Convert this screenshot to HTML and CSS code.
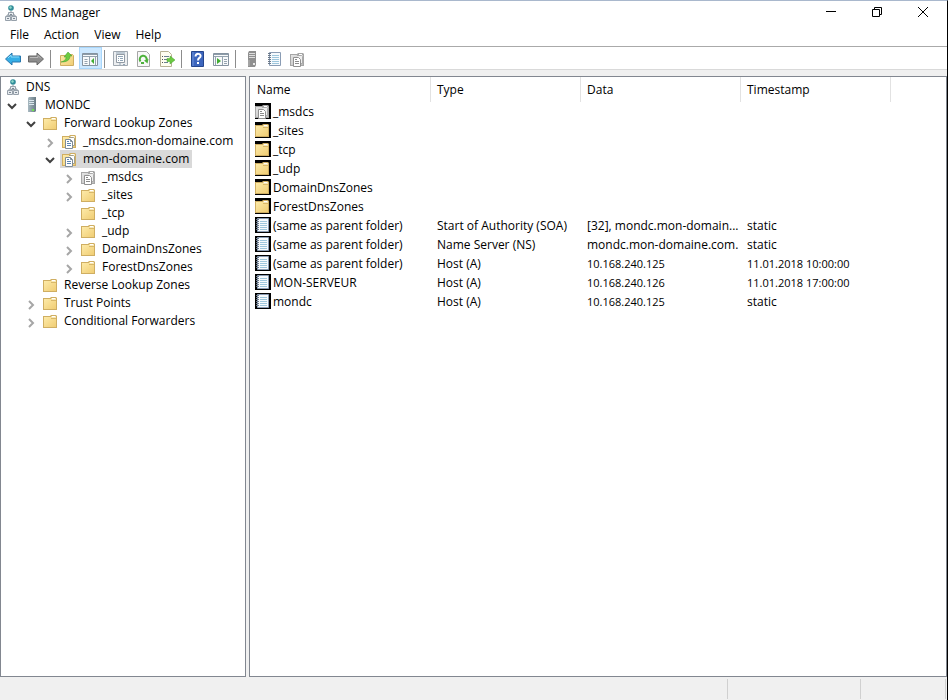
FILE: index.html
```html
<!DOCTYPE html>
<html lang="en">

<head>
  <meta charset="utf-8">
  <title>DNS Manager</title>
  <link rel="stylesheet" href="styles.css">
</head>

<body>
  <!-- shared icons -->
  <svg class="defs" aria-hidden="true">
    <linearGradient id="gold" x1="0" y1="0" x2="1" y2="1">
      <stop offset="0" stop-color="#fdeaa8"/>
      <stop offset="1" stop-color="#f0cd74"/>
    </linearGradient>
    <linearGradient id="silver" x1="0" y1="0" x2="1" y2="1">
      <stop offset="0" stop-color="#e4e4e4"/>
      <stop offset="1" stop-color="#bdbdbd"/>
    </linearGradient>
    <linearGradient id="steel" x1="0" y1="0" x2="1" y2="0">
      <stop offset="0" stop-color="#a9bac2"/>
      <stop offset="1" stop-color="#687a84"/>
    </linearGradient>
    <symbol id="i-folder" viewBox="0 0 16 16">
      <path d="M0 3h7l1-1h5l1 1v12H0z" fill="#cfae62"/>
      <path d="M1 4h12v10H1z" fill="url(#gold)"/>
      <path d="M8 3h5v2H9z" fill="#f8e7b4"/>
      <path d="M9 3.500h3" stroke="#fff"/>
      <path d="M8 5.500h5" stroke="#d9b869"/>
    </symbol>
    <symbol id="i-page" viewBox="0 0 16 16">
      <path d="M7 4.500h4.500l1 1v7H10" fill="#fff" stroke="#a3a08c"/>
      <path d="M3.500 6.500h5l2 2v7h-7z" fill="#fff" stroke="#7f8c97"/>
      <path d="M8.500 6.500v2h2" fill="none" stroke="#7f8c97"/>
      <path d="M5 8.500h2M5 10.500h4M5 12.500h4" stroke="#5b86b4"/>
    </symbol>
    <symbol id="i-zone" viewBox="0 0 16 16">
      <use href="#i-folder"/>
      <use href="#i-page"/>
    </symbol>
    <symbol id="i-zonegray" viewBox="0 0 16 16">
      <path d="M0 3h7l1-1h5l1 1v12H0z" fill="#a6a6a6"/>
      <path d="M1 4h12v10H1z" fill="url(#silver)"/>
      <path d="M9 3.500h3" stroke="#fff"/>
      <path d="M7 4.500h4.500l1 1v7H10" fill="#eee" stroke="#aaa"/>
      <path d="M3.500 6.500h5l2 2v7h-7z" fill="#fff" stroke="#909090"/>
      <path d="M5 8.500h2M5 10.500h4M5 12.500h4" stroke="#8a8a8a"/>
    </symbol>
    <symbol id="i-record" viewBox="0 0 16 16">
      <path d="M2.500 1.500h11v13h-11z" fill="#f6fafd" stroke="#8a9cb4"/>
      <path d="M5 4.500h7M5 6.500h7M5 8.500h7M5 10.500h7M5 12.500h7" stroke="#9dc6dc"/>
      <path d="M1 2.500h3M1 4.500h3M1 6.500h3M1 8.500h3M1 10.500h3M1 12.500h3" stroke="#6b7888"/>
    </symbol>
    <symbol id="i-dns" viewBox="0 0 16 16">
      <circle cx="8" cy="3" r="2.800" fill="#328d9a"/>
      <path d="M6 2l2-1 1 2-2 1z" fill="#8ed8c8"/>
      <path d="M8 6v4M4 12v-2h8v2" fill="none" stroke="#8b959e"/>
      <path d="M5.500 7.500h5v3h-5zM2.500 11.500h5v4h-5zM8.500 11.500h5v4h-5z" fill="#e6eaee" stroke="#96a0aa"/>
      <path d="M4 13.500h2M10 13.500h2M7 9.500h2" stroke="#7b8792"/>
    </symbol>
    <symbol id="i-server" viewBox="0 0 16 16">
      <path d="M4 1l1-1h7v14l-1 1H4z" fill="url(#steel)"/>
      <path d="M5 3.500h5M5 5.500h5M5 7.500h5" stroke="#dce8ee"/>
      <path d="M8 12h2v2H8z" fill="#6ee34f"/>
    </symbol>
    <symbol id="i-down" viewBox="0 0 16 16">
      <path d="M4 7l4 4 4-4" fill="none" stroke="#404040" stroke-width="2"/>
    </symbol>
    <symbol id="i-right" viewBox="0 0 16 16">
      <path d="M6 6l4 4-4 4" fill="none" stroke="#a6a6a6" stroke-width="2"/>
    </symbol>
  </svg>

  <div class="window">
    <header class="titlebar">
      <svg class="icon"><use href="#i-dns"/></svg>
      <h1>DNS Manager</h1>
      <div class="controls">
        <button aria-label="Minimize"><svg class="ctl" viewBox="0 0 12 12"><path d="M1 5.500h10"/></svg></button>
        <button aria-label="Restore"><svg class="ctl" viewBox="0 0 12 12"><path d="M1.500 3.500h7v7h-7zM3.500 3.500v-2h7v7h-2"/></svg></button>
        <button aria-label="Close"><svg class="ctl" viewBox="0 0 12 12"><path d="M1 1l10 10M11 1L1 11"/></svg></button>
      </div>
    </header>

    <nav class="menubar">
      <button>File</button>
      <button>Action</button>
      <button>View</button>
      <button>Help</button>
    </nav>

    <div class="toolbar">
      <button aria-label="Back"><svg class="icon" viewBox="0 0 16 16"><path d="M.5 8L7 2v3h8.500v6H7v3z" fill="#35aee6" stroke="#2877ad"/><path d="M3 7l3-3v2h8" fill="none" stroke="#8bdcfa"/></svg></button>
      <button aria-label="Forward"><svg class="icon" viewBox="0 0 16 16"><path d="M15.500 8L9 2v3H.5v6H9v3z" fill="#8c8c8c" stroke="#666"/><path d="M2 6.500h8v-2l3 3" fill="none" stroke="#b9b9b9"/></svg></button>
      <i class="sep"></i>
      <button aria-label="Up one level"><svg class="icon" viewBox="0 0 16 16"><path d="M1.500 4.500h7l1-1h4l1 1v10h-13z" fill="url(#gold)" stroke="#cfae62"/><path d="M2 11c4-1 5-3 5-5H5l4-5 4 4h-2c0 4-3 6-9 6z" fill="#6ccb3f" stroke="#3d9a2e" stroke-width=".5"/></svg></button>
      <button class="on" aria-label="Show console tree"><svg class="icon" viewBox="0 0 16 16"><path d="M.5 2.500h15v12H.5z" fill="#f8fafb" stroke="#8593a0"/><path d="M1 3.500h14" stroke="#8d9ca9"/><path d="M1 5.500h14M7.500 6v8M2.500 8.500h3M2.500 10.500h3M2.500 12.500h3M13.500 6v8" stroke="#95a3af"/><path d="M12 7v6L9 10z" fill="#3fac30"/></svg></button>
      <i class="sep"></i>
      <button aria-label="Properties"><svg class="icon" viewBox="0 0 16 16"><path d="M.5.500h14v14H.5z" fill="#eceef0" stroke="#a0a8b0"/><path d="M3.500 3.500h8v8h-8z" fill="#fff" stroke="#929ba4"/><path d="M3 2h9M5 5.500h5M5 7.500h1M7 7.500h3M5 9.500h1M7 9.500h3M6 13h2M10 13.500h2" stroke="#8fa4b6"/></svg></button>
      <button aria-label="Refresh"><svg class="icon" viewBox="0 0 16 16"><path d="M1.500.500h9l3 3v12h-12z" fill="#f8f8f8" stroke="#a6a6a6"/><path d="M4.500 10.500a3.500 3.500 0 1 1 6-1" fill="none" stroke="#4db13b" stroke-width="2"/><path d="M5 12h3" stroke="#4db13b" stroke-width="2"/><path d="M12.500 8l-1 4.500L8 9.500z" fill="#4db13b"/></svg></button>
      <button aria-label="Export list"><svg class="icon" viewBox="0 0 16 16"><path d="M1.500.500h8l3 3v12h-11z" fill="#fffef0" stroke="#b8b294"/><path d="M5 5.500h5M5 8.500h4M5 11.500h4" stroke="#6c8090"/><path d="M3 5.500h1M3 8.500h1M3 11.500h1" stroke="#555"/><path d="M8 7.500h3V5l5 4-5 4v-2.500H8z" fill="#6cc942" stroke="#43a52d" stroke-width=".5"/></svg></button>
      <i class="sep"></i>
      <button aria-label="Help"><svg class="icon" viewBox="0 0 16 16"><path d="M1.500.500h12v15h-12z" fill="#3c65bd" stroke="#24458d"/><path d="M3 1v14" stroke="#6f94db"/><path d="M5.500 5.500c0-4 6-3 5 0-.5 1.500-2.500 1.500-2.500 4M8 11v2" fill="none" stroke="#fff" stroke-width="2"/></svg></button>
      <button aria-label="Show action pane"><svg class="icon" viewBox="0 0 16 16"><path d="M.5 2.500h15v12H.5z" fill="#f8fafb" stroke="#8593a0"/><path d="M1 3.500h14" stroke="#8d9ca9"/><path d="M1 5.500h14M9.500 6v8M11 8.500h3M11 10.500h3M11 12.500h3M2.500 6v8" stroke="#95a3af"/><path d="M4 7v6l4-3z" fill="#3fac30"/></svg></button>
      <i class="sep"></i>
      <button aria-label="New server"><svg class="icon" viewBox="0 0 16 16"><path d="M5 0h7v14l-1 2H4V2z" fill="#8f8f8f"/><path d="M5 2.500h6M5 4.500h6M5 6.500h6" stroke="#ddd"/><path d="M5 9v6" stroke="#b8b8b8"/><path d="M9 12h2v2H9z" fill="#e8e8e8"/></svg></button>
      <button aria-label="New record"><svg class="icon"><use href="#i-record"/></svg></button>
      <button aria-label="New zone"><svg class="icon"><use href="#i-zonegray"/></svg></button>
    </div>

    <main class="panes">
      <section class="pane tree-pane">
        <ul class="tree">
          <li>
            <button class="node"><svg class="icon"><use href="#i-dns"/></svg>DNS</button>
            <ul>
              <li>
                <button class="toggle" aria-label="Collapse"><svg class="icon"><use href="#i-down"/></svg></button><button class="node"><svg class="icon"><use href="#i-server"/></svg>MONDC</button>
                <ul>
                  <li>
                    <button class="toggle" aria-label="Collapse"><svg class="icon"><use href="#i-down"/></svg></button><button class="node"><svg class="icon"><use href="#i-folder"/></svg>Forward Lookup Zones</button>
                    <ul>
                      <li><button class="toggle" aria-label="Expand"><svg class="icon"><use href="#i-right"/></svg></button><button class="node"><svg class="icon"><use href="#i-zone"/></svg>_msdcs.mon-domaine.com</button></li>
                      <li>
                        <button class="toggle" aria-label="Collapse"><svg class="icon"><use href="#i-down"/></svg></button><button class="node selected"><svg class="icon"><use href="#i-zone"/></svg>mon-domaine.com</button>
                        <ul>
                          <li><button class="toggle" aria-label="Expand"><svg class="icon"><use href="#i-right"/></svg></button><button class="node"><svg class="icon"><use href="#i-zonegray"/></svg>_msdcs</button></li>
                          <li><button class="toggle" aria-label="Expand"><svg class="icon"><use href="#i-right"/></svg></button><button class="node"><svg class="icon"><use href="#i-folder"/></svg>_sites</button></li>
                          <li><span class="toggle"></span><button class="node"><svg class="icon"><use href="#i-folder"/></svg>_tcp</button></li>
                          <li><button class="toggle" aria-label="Expand"><svg class="icon"><use href="#i-right"/></svg></button><button class="node"><svg class="icon"><use href="#i-folder"/></svg>_udp</button></li>
                          <li><button class="toggle" aria-label="Expand"><svg class="icon"><use href="#i-right"/></svg></button><button class="node"><svg class="icon"><use href="#i-folder"/></svg>DomainDnsZones</button></li>
                          <li><button class="toggle" aria-label="Expand"><svg class="icon"><use href="#i-right"/></svg></button><button class="node"><svg class="icon"><use href="#i-folder"/></svg>ForestDnsZones</button></li>
                        </ul>
                      </li>
                    </ul>
                  </li>
                  <li><span class="toggle"></span><button class="node"><svg class="icon"><use href="#i-folder"/></svg>Reverse Lookup Zones</button></li>
                  <li><button class="toggle" aria-label="Expand"><svg class="icon"><use href="#i-right"/></svg></button><button class="node"><svg class="icon"><use href="#i-folder"/></svg>Trust Points</button></li>
                  <li><button class="toggle" aria-label="Expand"><svg class="icon"><use href="#i-right"/></svg></button><button class="node"><svg class="icon"><use href="#i-folder"/></svg>Conditional Forwarders</button></li>
                </ul>
              </li>
            </ul>
          </li>
        </ul>
      </section>

      <section class="pane list-pane">
        <table class="records">
          <colgroup>
            <col class="c-name"><col class="c-type"><col class="c-data"><col class="c-time"><col>
          </colgroup>
          <thead>
            <tr><th>Name</th><th>Type</th><th>Data</th><th>Timestamp</th><td></td></tr>
          </thead>
          <tbody>
            <tr><td><svg class="icon tile"><use href="#i-zonegray"/></svg>_msdcs</td><td></td><td></td><td></td><td></td></tr>
            <tr><td><svg class="icon tile"><use href="#i-folder"/></svg>_sites</td><td></td><td></td><td></td><td></td></tr>
            <tr><td><svg class="icon tile"><use href="#i-folder"/></svg>_tcp</td><td></td><td></td><td></td><td></td></tr>
            <tr><td><svg class="icon tile"><use href="#i-folder"/></svg>_udp</td><td></td><td></td><td></td><td></td></tr>
            <tr><td><svg class="icon tile"><use href="#i-folder"/></svg>DomainDnsZones</td><td></td><td></td><td></td><td></td></tr>
            <tr><td><svg class="icon tile"><use href="#i-folder"/></svg>ForestDnsZones</td><td></td><td></td><td></td><td></td></tr>
            <tr><td><svg class="icon tile"><use href="#i-record"/></svg>(same as parent folder)</td><td>Start of Authority (SOA)</td><td>[32], mondc.mon-domain...</td><td>static</td><td></td></tr>
            <tr><td><svg class="icon tile"><use href="#i-record"/></svg>(same as parent folder)</td><td>Name Server (NS)</td><td>mondc.mon-domaine.com.</td><td>static</td><td></td></tr>
            <tr><td><svg class="icon tile"><use href="#i-record"/></svg>(same as parent folder)</td><td>Host (A)</td><td class="num">10.168.240.125</td><td class="num">11.01.2018 10:00:00</td><td></td></tr>
            <tr><td><svg class="icon tile"><use href="#i-record"/></svg>MON-SERVEUR</td><td>Host (A)</td><td class="num">10.168.240.126</td><td class="num">11.01.2018 17:00:00</td><td></td></tr>
            <tr><td><svg class="icon tile"><use href="#i-record"/></svg>mondc</td><td>Host (A)</td><td class="num">10.168.240.125</td><td>static</td><td></td></tr>
          </tbody>
        </table>
      </section>
    </main>

    <footer class="statusbar">
      <span></span>
      <span class="s-mid"></span>
      <span class="s-end"></span>
    </footer>
  </div>
</body>
</html>
```

FILE: styles.css
```css
* {
  box-sizing: border-box;
}
body {
  margin: 0;
  font-family: "Open Sans", "Noto Sans", sans-serif;
  font-size: 12px;
  line-height: 18px;
  color: #000;
  background: #f0f0f0;
}
button {
  margin: 0;
  padding: 0;
  border: 0;
  background: none;
  font: inherit;
  color: inherit;
}
.defs {
  position: absolute;
  width: 0;
  height: 0;
}
.icon {
  width: 16px;
  height: 16px;
  flex: none;
  display: block;
}
.window {
  display: flex;
  flex-direction: column;
  height: 100vh;
  border-top: 1px solid #a9b8cd;
  border-right: 1px solid #000;
}

/* title */
.titlebar {
  display: flex;
  align-items: center;
  height: 24px;
  padding: 0 1px 0 3px;
  background: #fff;
}
.titlebar h1 {
  flex: 1;
  margin: 0 0 0 4px;
  font-size: 12px;
  font-weight: normal;
}
.controls {
  display: flex;
}
.controls button {
  width: 46px;
  height: 24px;
}
.ctl {
  display: block;
  width: 12px;
  height: 12px;
  margin: 0 auto 2px;
  fill: none;
  stroke: #000;
}

/* menu */
.menubar {
  display: flex;
  height: 22px;
  padding: 0 3px 2px;
  background: #fff;
  border-bottom: 1px solid #aaa;
}
.menubar button {
  padding: 0 8px 0 7px;
}

/* toolbar */
.toolbar {
  display: flex;
  height: 23px;
  padding-left: 2px;
  background: #fff;
  border-bottom: 1px solid #d9d9d9;
}
.toolbar button {
  width: 23px;
  padding: 2px 0 0 3px;
}
.toolbar .on {
  background: #cce8ff;
  box-shadow: inset 0 0 0 1px #a8d6fb;
}
.sep {
  width: 8px;
  padding-left: 2px;
}
.sep::before {
  content: "";
  display: block;
  width: 1px;
  height: 18px;
  margin-top: 3px;
  background: #8c8c8c;
}

/* panes */
.panes {
  display: flex;
  flex: 1;
  gap: 3px;
  padding-top: 6px;
  min-height: 0;
}
.pane {
  background: #fff;
  border: 1px solid #828790;
  overflow: hidden;
}
.tree-pane {
  width: 246px;
  flex: none;
}
.list-pane {
  flex: 1;
}

/* tree */
.tree,
.tree ul {
  margin: 0;
  padding: 0;
  list-style: none;
}
.tree {
  padding: 1px 0 0 2px;
}
.tree ul ul {
  padding-left: 19px;
}
.toggle {
  display: inline-block;
  width: 19px;
  height: 18px;
  padding-left: 1px;
  vertical-align: top;
}
.node {
  display: inline-flex;
  align-items: center;
  gap: 5px;
  height: 18px;
  padding: 0 3px 0 2px;
  vertical-align: top;
  white-space: nowrap;
}
.selected {
  background: #d9d9d9;
}

/* records */
.records {
  width: 100%;
  table-layout: fixed;
  border-collapse: separate;
  border-spacing: 0;
}
.c-name {
  width: 181px;
}
.c-type {
  width: 150px;
}
.c-data {
  width: 160px;
}
.c-time {
  width: 150px;
}
.records th,
.records td {
  height: 19px;
  padding: 0 0 0 6px;
  text-align: left;
  font-weight: normal;
  white-space: nowrap;
}
.records th {
  height: 25px;
  border-right: 1px solid #e2e2e2;
}
.records th:first-child {
  padding-left: 7px;
}
.records td:first-child {
  padding-left: 5px;
}
.records .num {
  font-size: 11px;
}
.tile {
  display: inline-block;
  margin-right: 2px;
  background: #000;
  vertical-align: top;
}

/* status */
.statusbar {
  display: flex;
  height: 23px;
  padding: 2px 1px 1px 0;
}
.statusbar span {
  flex: 1;
  border-right: 1px solid #d0d0d0;
}
.statusbar .s-mid {
  flex: none;
  width: 133px;
}
.statusbar .s-end {
  flex: none;
  width: 85px;
}
```
